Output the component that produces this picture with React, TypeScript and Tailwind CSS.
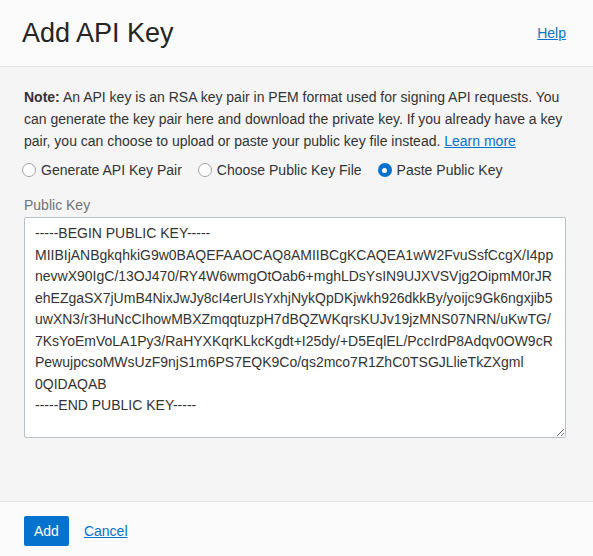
import React, { useState } from 'react';

const PEM_TEXT = [
  '-----BEGIN PUBLIC KEY-----',
  'MIIBIjANBgkqhkiG9w0BAQEFAAOCAQ8AMIIBCgKCAQEA1wW2FvuSsfCcgX/I4pp',
  'nevwX90IgC/13OJ470/RY4W6wmgOtOab6+mghLDsYsIN9UJXVSVjg2OipmM0rJR',
  'ehEZgaSX7jUmB4NixJwJy8cI4erUIsYxhjNykQpDKjwkh926dkkBy/yoijc9Gk6ngxjib5',
  'uwXN3/r3HuNcCIhowMBXZmqqtuzpH7dBQZWKqrsKUJv19jzMNS07NRN/uKwTG/',
  '7KsYoEmVoLA1Py3/RaHYXKqrKLkcKgdt+I25dy/+D5EqlEL/PccIrdP8Adqv0OW9cR',
  'PewujpcsoMWsUzF9njS1m6PS7EQK9Co/qs2mco7R1ZhC0TSGJLlieTkZXgml',
  '0QIDAQAB',
  '-----END PUBLIC KEY-----',
].join('\n');

const OPTIONS = [
  { value: 'generate', label: 'Generate API Key Pair' },
  { value: 'file', label: 'Choose Public Key File' },
  { value: 'paste', label: 'Paste Public Key' },
];

function Radio({ checked }: { checked: boolean }) {
  if (checked) {
    return (
      <span className="w-[14px] h-[14px] rounded-full bg-[#0572ce] flex items-center justify-center shrink-0">
        <span className="w-[5px] h-[5px] rounded-full bg-white" />
      </span>
    );
  }
  return <span className="w-[14px] h-[14px] rounded-full border border-[#a3a3a3] bg-white shrink-0" />;
}

export default function App() {
  const [mode, setMode] = useState('paste');
  const [key, setKey] = useState(PEM_TEXT);

  return (
    <div className="w-[593px] h-[556px] flex flex-col font-['Liberation_Sans',Arial,sans-serif] text-[#333]">
      {/* Header */}
      <div className="h-[67px] bg-[#fbfbfb] border-b border-[#e4e4e4] flex items-center justify-between pl-[22px] pr-[27px]">
        <h1 className="text-[27px] text-[#252525] leading-none">Add API Key</h1>
        <a href="#" className="text-[14px] text-[#0572ce] underline">
          Help
        </a>
      </div>

      {/* Body */}
      <div className="flex-1 bg-[#f5f5f5] px-6 pt-[19px]">
        <p className="text-[14px] leading-[22px] text-[#333]">
          <b>Note:</b> An API key is an RSA key pair in PEM format used for signing API requests. You can generate the
          key pair here and download the private key. If you already have a key pair, you can choose to upload or paste
          your public key file instead.{' '}
          <a href="#" className="text-[#0572ce] underline">
            Learn more
          </a>
        </p>

        <div className="flex items-center mt-[8px] h-[20px] text-[14px]">
          {OPTIONS.map((opt) => (
            <label
              key={opt.value}
              onClick={() => setMode(opt.value)}
              className="flex items-center gap-[5px] mr-[18px] cursor-pointer -ml-[2px]"
            >
              <Radio checked={mode === opt.value} />
              <span className="text-[#333]">{opt.label}</span>
            </label>
          ))}
        </div>

        <div className="mt-[15px] text-[14px] leading-[20px] text-[#737373]">Public Key</div>
        <textarea
          value={key}
          onChange={(e) => setKey(e.target.value)}
          wrap="off"
          spellCheck={false}
          className="mt-[2px] block w-[542px] h-[221px] bg-white border border-[#b8c0c8] rounded-[2px] pl-[10px] pr-2 pt-[5px] text-[14px] leading-[21.5px] text-[#333] overflow-hidden outline-none font-['Liberation_Sans',Arial,sans-serif]"
        />
      </div>

      {/* Footer */}
      <div className="h-[55px] bg-[#fbfbfb] border-t border-[#e4e4e4] flex items-start pt-[14px] px-6 gap-[15px]">
        <button className="h-[30px] px-[10px] bg-[#0572ce] text-white text-[14px] rounded-[2px]">Add</button>
        <a href="#" className="text-[14px] leading-[30px] text-[#0572ce] underline">
          Cancel
        </a>
      </div>
    </div>
  );
}
